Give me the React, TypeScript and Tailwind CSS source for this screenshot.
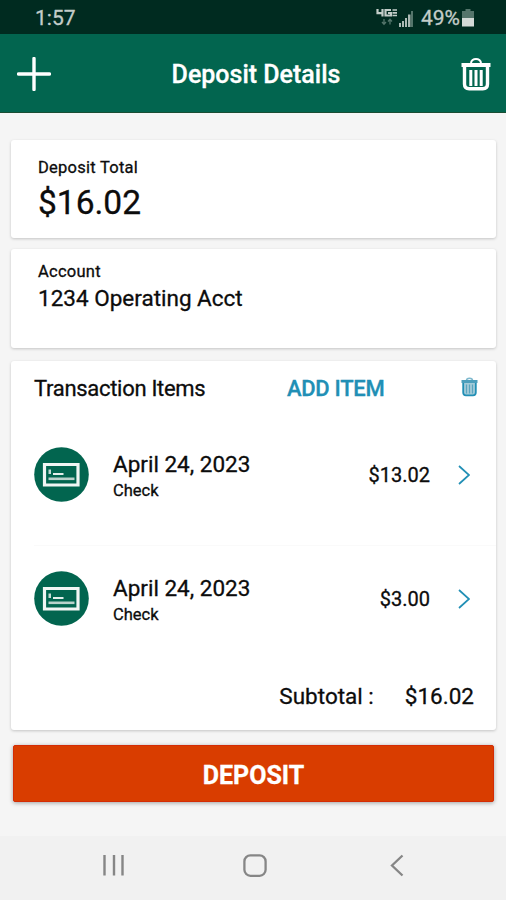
import React from 'react';

const items = [
  { date: 'April 24, 2023', type: 'Check', amount: '$13.02' },
  { date: 'April 24, 2023', type: 'Check', amount: '$3.00' },
];

function StatusBar() {
  return (
    <div className="flex h-[34px] items-center justify-between bg-[#002b20] pl-[35px] pr-[32px] pt-[2px] text-[#c3cdc9]">
      <span className="text-[21px] leading-7">1:57</span>
      <div className="flex items-center">
        {/* 4G LTE */}
        <svg width="23" height="20" viewBox="0 0 23 20" fill="none">
          <path d="M1.5 1v4.2h6M6.5 1v7.5M15 2H9.5v5.5H15V5h-3" stroke="currentColor" strokeWidth="2.2" />
          <path d="M16.5 2H21M16.5 4.8H21M16.5 7.5H21" stroke="currentColor" strokeWidth="1.7" />
          <path d="M8 11v5M6 14l2 2.2 2-2.2M14 16.5v-5M12 13.5l2-2.2 2 2.2" stroke="#54756b" strokeWidth="1.3" />
        </svg>
        {/* Signal */}
        <svg width="14" height="17" viewBox="0 0 14 17">
          <path d="M0 13h2v4H0zM3 11h2v6H3zM6 8h2v9H6zM9 4.5h2.5V17H9z" fill="#abb9b4" />
          <path d="M12 1h2v16h-2z" fill="#54756b" />
        </svg>
        <span className="ml-[8px] text-[21px] leading-7">49%</span>
        <svg className="ml-[2px]" width="12" height="18" viewBox="0 0 12 18">
          <path d="M3.5 0h5v2H12v7H0V2h3.5z" fill="#54756b" />
          <path d="M0 9h12v8.5H0z" fill="#d3dad7" />
        </svg>
      </div>
    </div>
  );
}

function Header() {
  return (
    <header className="flex h-[79px] items-center justify-between border-b border-[#1a4d33] bg-[#02654f] pl-[17px] pr-[15px] text-white">
      <svg className="mt-px" width="34" height="34" viewBox="0 0 34 34" fill="none">
        <path d="M17 1.5v31M1.5 17h31" stroke="currentColor" strokeWidth="3.4" strokeLinecap="round" />
      </svg>
      <h1 className="pt-[4px] text-[25px] font-medium leading-8">Deposit Details</h1>
      <svg className="mt-px" width="30" height="34" viewBox="0 0 30 34" fill="none">
        <path d="M10 6.5C10 0.5 20 0.5 20 6.5" stroke="currentColor" strokeWidth="2" />
        <path d="M0.5 6h29v4H0.5z" fill="currentColor" />
        <path d="M3.5 10v17q0 4.7 4.7 4.7h13.6q4.7 0 4.7-4.7V10" stroke="currentColor" strokeWidth="3.4" />
        <path d="M9.8 13v16M15 13v16M20.2 13v16" stroke="currentColor" strokeWidth="3" />
      </svg>
    </header>
  );
}

function CheckIcon() {
  return (
    <svg width="55" height="55" viewBox="0 0 55 55" fill="none">
      <circle cx="27.5" cy="27.5" r="27.3" fill="#02654f" />
      <path d="M10.5 17.5H44V38H10.5z" stroke="#f1f6f4" strokeWidth="3.2" />
      <path d="M14.5 22.5H17V27h-2.5z" fill="#c5dad4" />
      <path d="M19 27h10.5" stroke="#e4eeeb" strokeWidth="2" />
      <path d="M14.5 31.8h26" stroke="#b9d2cb" strokeWidth="2.6" />
    </svg>
  );
}

function ItemRow({ date, type, amount }: { date: string; type: string; amount: string }) {
  return (
    <div className="h-[124px] pt-[25px]">
      <div className="flex h-[55px] items-center">
        <CheckIcon />
        <div className="ml-[24px] flex-1 pt-px">
          <p className="text-[22.5px] leading-7">{date}</p>
          <p className="mt-[3px] text-[16.5px] leading-5">{type}</p>
        </div>
        <span className="pt-px text-[20px] leading-7">{amount}</span>
        <svg className="ml-[28px] mr-[26px]" width="12" height="20" viewBox="0 0 12 20" fill="none">
          <path d="M1 1l10 9-10 9" stroke="#218fb5" strokeWidth="1.7" />
        </svg>
      </div>
    </div>
  );
}

export default function App() {
  return (
    <div className="flex h-[900px] w-[506px] flex-col bg-[#f5f5f5] font-['Roboto',sans-serif] text-[#0c0c0c] [-webkit-text-stroke:0.3px]">
      <StatusBar />
      <Header />

      <main className="flex-1 pl-[11px] pr-[10px] pt-[27px]">
        {/* Total */}
        <section className="h-[98px] rounded-[3px] bg-white pl-[27px] pt-[18px] shadow-[0_1px_3px_rgba(0,0,0,0.2)]">
          <p className="text-[16.5px] leading-5 tracking-[0.25px]">Deposit Total</p>
          <p className="mt-[5px] text-[33.5px] leading-10">$16.02</p>
        </section>

        {/* Account */}
        <section className="mt-[11px] h-[99px] rounded-[3px] bg-white pl-[27px] pt-[13px] shadow-[0_1px_3px_rgba(0,0,0,0.2)]">
          <p className="text-[16.5px] leading-5 tracking-[0.25px]">Account</p>
          <p className="mt-[2px] text-[22.5px] leading-7">1234 Operating Acct</p>
        </section>

        {/* Items */}
        <section className="mt-[13px] h-[369px] rounded-[3px] bg-white pl-[23px] shadow-[0_1px_3px_rgba(0,0,0,0.2)]">
          <div className="flex h-[61px] items-start pr-[18px] pt-[14px]">
            <h2 className="w-[253px] text-[22px] leading-7 tracking-[-0.3px]">Transaction Items</h2>
            <button className="text-[22px] font-medium leading-7 tracking-[-0.3px] text-[#218fb5]">ADD ITEM</button>
            <svg className="ml-auto mt-[2px]" width="17" height="20" viewBox="0 0 17 20" fill="none">
              <path d="M5.5 3.5C5.5 0.5 11.5 0.5 11.5 3.5" stroke="#7fb9ce" strokeWidth="1.5" />
              <path d="M0.5 3h16v3H0.5z" fill="#4d9fbc" />
              <path d="M2.2 6v9.5q0 2.8 2.8 2.8h7q2.8 0 2.8-2.8V6" fill="#a4cbd9" stroke="#218fb5" strokeWidth="1.8" />
              <path d="M5.5 7.5v9M8.5 7.5v9M11.5 7.5v9" stroke="#5ba5bf" strokeWidth="1.2" />
            </svg>
          </div>
          <ItemRow {...items[0]} />
          <div className="-mt-px h-px bg-[#fafafa]" />
          <ItemRow {...items[1]} />
          <div className="flex justify-end pr-[22px] pt-[12px] text-[22.5px] leading-7">
            <span>Subtotal :</span>
            <span className="ml-[31px]">$16.02</span>
          </div>
        </section>

        <button className="ml-[2px] mt-[15px] flex h-[57px] w-[481px] items-center justify-center rounded-[2px] border border-[#d42c05] bg-[#d93d00] pt-[4px] text-[25px] font-bold text-white shadow-[0_1px_4px_rgba(0,0,0,0.35)]">
          DEPOSIT
        </button>
      </main>

      {/* Android navigation */}
      <nav className="flex h-[64px] items-start bg-[#f1f1f1] text-[#868686]">
        <svg className="ml-[103px] mt-[18px]" width="22" height="23" viewBox="0 0 22 23">
          <path d="M1.5 1v20.5M11 1v20.5M19.5 1v20.5" stroke="currentColor" strokeWidth="2.4" />
        </svg>
        <svg className="ml-[118px] mt-[18px]" width="24" height="23" viewBox="0 0 24 23" fill="none">
          <rect x="1.4" y="1.4" width="21.2" height="20.4" rx="6" stroke="currentColor" strokeWidth="2.3" />
        </svg>
        <svg className="ml-[123px] mt-[18px]" width="14" height="23" viewBox="0 0 14 23" fill="none">
          <path d="M12.5 1.5l-10.5 10 10.5 10" stroke="currentColor" strokeWidth="2.3" />
        </svg>
      </nav>
    </div>
  );
}
